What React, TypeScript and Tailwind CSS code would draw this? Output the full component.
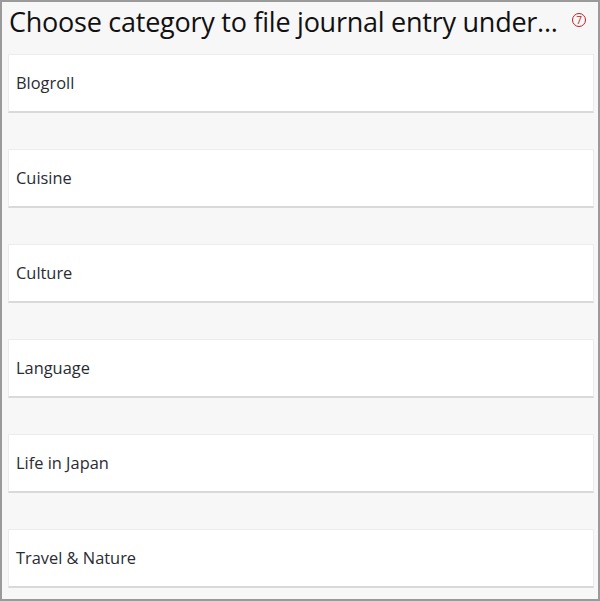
export default function App() {
  const items = ["Blogroll", "Cuisine", "Culture", "Language", "Life in Japan", "Travel & Nature"];
  return (
    <div className="w-[600px] h-[601px] bg-[#f7f7f7] border-2 border-[#9a9a9a] overflow-hidden" style={{ fontFamily: '"Open Sans", "Noto Sans", sans-serif' }}>
      <div className="flex items-start pl-[7px] pr-[12px] h-[52px]">
        <div className="text-[27px] leading-[39px] text-[#111] whitespace-nowrap tracking-[-0.25px]">Choose category to file journal entry under...</div>
        <div className="shrink-0 ml-auto mt-[11px] w-[14px] h-[14px] rounded-full border border-[#c0201f] text-[#c0201f] text-[10px] leading-none flex items-center justify-center">7</div>
      </div>
      <div className="flex flex-col gap-[36px] pl-[6px] pr-[4px]">
        {items.map((t) => (
          <div key={t} className="h-[59px] bg-white border-t border-[#ececec] border-b-2 border-b-[#d9d9d9] border-l border-l-[#ececec] border-r border-r-[#ececec] flex items-center pl-[7px] text-[16.4px] text-[#2b2b33]">
            {t}
          </div>
        ))}
      </div>
    </div>
  );
}
